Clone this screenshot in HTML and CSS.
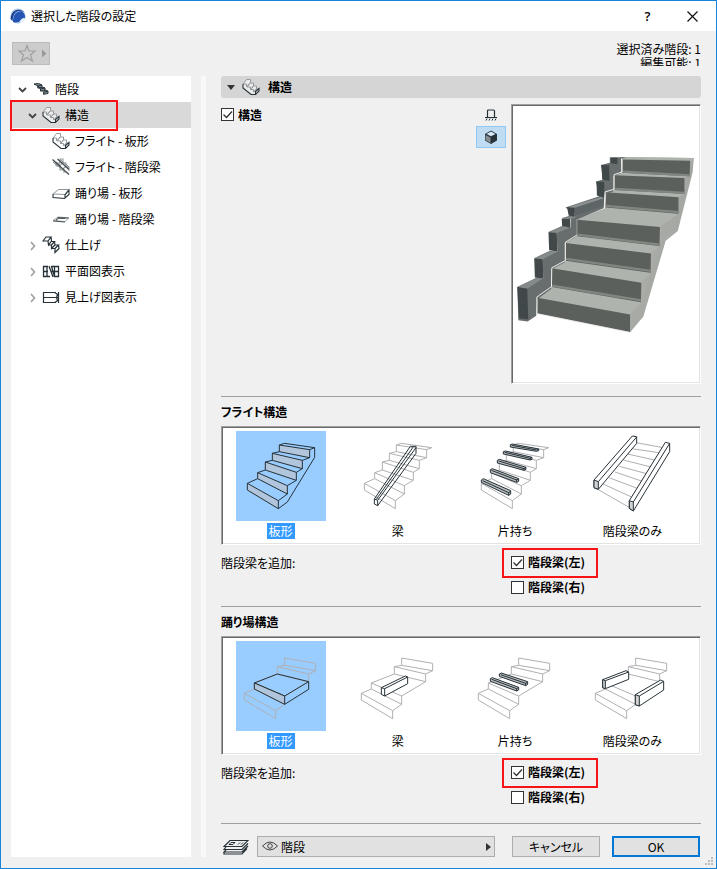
FILE: index.html
```html
<!DOCTYPE html>
<html lang="ja">
<head>
<meta charset="utf-8">
<meta name="viewport" content="width=device-width, initial-scale=1">
<title>選択した階段の設定</title>
<link rel="stylesheet" href="styles.css">
</head>
<body>
<svg class="sprite" aria-hidden="true">
  <symbol id="i-down" viewBox="0 0 9 18"><path d="M1 8l3.500 3.500L8 8" fill="none" stroke="#444" stroke-width="1.800"/></symbol>
  <symbol id="i-right" viewBox="0 0 9 18"><path d="M3 6l3.500 4L3 14" fill="none" stroke="#a3a3a3" stroke-width="1.700"/></symbol>
  <symbol id="i-slab" viewBox="0 0 18 18">
    <path d="M1 6l3.500-4.500h4v3.500h3v3h3v3h3L14 16h-4L1 10z" fill="#fff" fill-opacity=".5"/>
    <path d="M1 6l3.500-4.500h4v3l-3 4M1 6h3.500v3L8 5h3.500v3l-3 3.500V9H5M8.500 11.500L11.500 8h3v3l-3 3v-2.500h-3M11.500 14l3-3H17" fill="none" stroke="#959b9d" stroke-width="1"/>
    <path d="M1 6v4l8 6.500h4.500l3.500-3.500v-2.500l-3.500 3v3" fill="none" stroke="#263238" stroke-width="1.100"/>
  </symbol>
  <symbol id="i-stair" viewBox="0 0 18 18">
    <path d="M2 4l5-.5 3 1.500v2l3 .5v2l3 .8v3l-5 1v-2.500l-3-.5V9L5 8V5.500z" fill="#899093"/>
    <path d="M2 4l4.500-.5L10 5 6 6zM6 6v2l5-.7L13 8 8.500 9zM8.500 9v2l5-.7 2.500 1-4.500 1v2L16 13.500M13 8v2M10 5v2M16 11v2.500" fill="none" stroke="#263238" stroke-width="1"/>
  </symbol>
  <symbol id="i-stringer" viewBox="0 0 18 18">
    <path d="M4 8V5h4V1h3v4h3v4h3v4M4 8h4v4h4v3M4 4l4 3M8 8l3-4M11 11l3-3" fill="none" stroke="#9a9fa1" stroke-width="1.100"/>
    <path d="M.5 1.500l16.500 15M5.500 1l11.500 10.500" fill="none" stroke="#3d474c" stroke-width="1.200"/><path d="M1 4l13 10.500M8 1.500L17 9" stroke="#80878a"/>
  </symbol>
  <symbol id="i-landing" viewBox="0 0 18 18">
    <path d="M1 10l5.500-4.500h10l-3.500 5z" fill="#fff" stroke="#8f9597"/>
    <path d="M1 10v3.500l11.500 1 4.500-4V6l-4 5v3" fill="none" stroke="#263238" stroke-width="1.100"/>
  </symbol>
  <symbol id="i-beam" viewBox="0 0 18 18">
    <path d="M1 10.500l5-3.500 11 .8-4 3.700z" fill="#fff" stroke="#a2a7a9"/>
    <path d="M5.500 7.500l11 .5M1 11l12 1M4 10l2-1.500h7" fill="none" stroke="#4a5459" stroke-width="1.100"/>
  </symbol>
  <symbol id="i-finish" viewBox="0 0 18 18">
    <path d="M1 5l3-4h5L6 5zM6 5l.5 4L9.500 5 9 1M6.500 9h3L12.500 5.500h-3M9.500 9v3.500l3.500-3.500-.5-3.500M9.500 12.500h3.500L16.500 9H13M13 12.500V16.500l4-4-.5-3.500" fill="none" stroke="#263238" stroke-width="1.200"/>
  </symbol>
  <symbol id="i-plan" viewBox="0 0 18 18">
    <path d="M6 4.500H1.500v10H8M1.500 9.500H6M5 4.500v10M7 4l4 11M9 4.500h7.500v10H12M9.500 4.500l3 10M12.500 4.500v10M9 9.500h7.500" fill="none" stroke="#263238" stroke-width="1.300"/>
  </symbol>
  <symbol id="i-rcp" viewBox="0 0 18 18">
    <path d="M14 4.500H1.500v10H14M1.500 9.500H16M13 4.500l2.500 2-1 3 1 3-2.500 2M16.500 4v11" fill="none" stroke="#263238" stroke-width="1.200"/>
  </symbol>
  <symbol id="flight" viewBox="0 0 270 270">
    <path d="M130 42v20l91 18V56zM109 67v21l90 25V88zM88 93v24l93 31v-24zM65 125v18l89 46v-25zM34 157v20l93 56v-24z" class="riser"/>
    <path d="M130 42l15-5 91 13-15 6M109 67l21-5M221 80l-22 8M88 93l21-5M199 113l-18 11M65 125l23-8M181 148l-27 16M34 157l31-14M154 189l-27 20"/>
  </symbol>
  <symbol id="landing" viewBox="0 0 270 270">
    <path d="M146 51l93 16v22l-93-16zM124 77l22-4M239 89l-21 10-94-22v22l94 23V99M55 126l69-27M218 122l-72 43-91-39v18l91 46v-25M25 157l30-13M146 190l-27 19-94-52v20l94 56v-24"/>
  </symbol>
</svg>

<div class="window">
  <header class="titlebar">
    <svg class="logo" viewBox="0 0 16 16" aria-hidden="true"><circle cx="8" cy="8" r="7.500" fill="#a9c4e6"/><path d="M.5 11C1 3 8-1 14 4L9 3C5 3.500 3 7 2.500 13z" fill="#1b3f91"/><path d="M3 14C3 7 6 3.500 10 3.500c3 0 5 2 5.300 6.500-1-.5-2.500-.5-4 1.500-1.500 2.500-5 4-8.300 2.500z" fill="#2455b5"/><path d="M10 13.500c1-3 3-3.500 5-2.500-.5 2-2 3.500-5 4.300z" fill="#e8f0fa"/></svg>
    <h1 class="title">選択した階段の設定</h1>
    <button class="caption" type="button" aria-label="ヘルプ">?</button>
    <button class="caption" type="button" aria-label="閉じる"><svg width="11" height="11" viewBox="0 0 11 11"><path d="M.5.5l10 10M10.500.5l-10 10" stroke="#111" stroke-width="1.200"/></svg></button>
  </header>

  <div class="toolbar">
    <button class="favorite" type="button" aria-label="お気に入り"><svg width="36" height="21" viewBox="0 0 36 21"><path d="M14 2.500l2 5.500h6l-4.500 4 2 6-5.500-3.500L8.500 18l2-6L6 8h6z" fill="none" stroke="#a0a0a0" stroke-width="1.200"/><path d="M29 6.500v8l4.500-4z" fill="#999"/></svg></button>
    <div class="counts"><p class="count">選択済み階段: 1</p><p class="count count-cut">編集可能: 1</p></div>
  </div>

  <div class="body">
    <nav class="sidebar">
      <ul class="tree">
        <li><button class="node" type="button"><svg class="arrow"><use href="#i-down"/></svg><svg class="icon"><use href="#i-stair"/></svg>階段</button></li>
        <li class="marked-row"><button class="node level2 current" type="button"><svg class="arrow"><use href="#i-down"/></svg><svg class="icon"><use href="#i-slab"/></svg>構造</button></li>
        <li><button class="node level3" type="button"><span class="arrow"></span><svg class="icon"><use href="#i-slab"/></svg>フライト - 板形</button></li>
        <li><button class="node level3" type="button"><span class="arrow"></span><svg class="icon"><use href="#i-stringer"/></svg>フライト - 階段梁</button></li>
        <li><button class="node level3" type="button"><span class="arrow"></span><svg class="icon"><use href="#i-landing"/></svg>踊り場 - 板形</button></li>
        <li><button class="node level3" type="button"><span class="arrow"></span><svg class="icon"><use href="#i-beam"/></svg>踊り場 - 階段梁</button></li>
        <li><button class="node level2" type="button"><svg class="arrow"><use href="#i-right"/></svg><svg class="icon"><use href="#i-finish"/></svg>仕上げ</button></li>
        <li><button class="node level2" type="button"><svg class="arrow"><use href="#i-right"/></svg><svg class="icon"><use href="#i-plan"/></svg>平面図表示</button></li>
        <li><button class="node level2" type="button"><svg class="arrow"><use href="#i-right"/></svg><svg class="icon"><use href="#i-rcp"/></svg>見上げ図表示</button></li>
      </ul>
    </nav>
    <div class="splitter"></div>

    <main class="panel">
      <button class="panel-head" type="button"><svg width="8" height="5" viewBox="0 0 8 5"><path d="M0 0h8L4 5z" fill="#333"/></svg><svg class="icon"><use href="#i-slab"/></svg>構造</button>

      <section class="overview">
        <label class="check"><input type="checkbox" checked>構造</label>
        <div class="views">
          <button class="view" type="button" aria-label="2D 表示"><svg width="14" height="14" viewBox="0 0 14 14"><path d="M3.500 9V3q0-1 1-1h5q1 0 1 1v6M1 9.500h12" fill="none" stroke="#263238" stroke-width="1.200"/><path d="M2 12.500l1-2M5 12.500l1-2M8 12.500l1-2M11 12.500l1-2" stroke="#263238"/></svg></button>
          <button class="view view-on" type="button" aria-label="3D 表示"><svg width="14" height="14" viewBox="0 0 14 14"><path d="M1 4l6-3.500L13 4v6.500L7 14l-6-3.500z" fill="#263238"/><path d="M2.500 4L7 1.500 11.500 4 7 6.300z" fill="#d5e6f6"/><path d="M1.500 5L6.500 7.500V13l-5-3z" fill="#868d92"/></svg></button>
        </div>
        <div class="preview">
          <svg viewBox="24 -102 561 828" role="img" aria-label="階段のプレビュー">
            <defs><linearGradient id="side" x1="0" x2="1"><stop offset="0" stop-color="#b7bab5"/><stop offset="1" stop-color="#a3a6a1"/></linearGradient></defs>
            <path d="M353 49L569 52 566 94 521 272 484 302 417 530 378 577 97 520 98 470 141 384 183 306 218 236 301 204 304 153 329 102 351 96z" fill="url(#side)"/>
            <path d="M353 49l216 3v9l-216-5zM329 104l24-8 204 11-16 5zM304 155l25-7 212 12-18 10zM218 238l86-34 219 16-56 40zM183 308l35-17 248 27-26 22zM141 384l41-20 257 34-28 30zM98 473l43-31 269 45-33 37z" fill="#afb3ae"/>
            <g fill="#5c605c"><path d="M353 56l205 4-1 47-204-11zM329 104l212 8v48l-212-12zM304 155l219 15v50l-219-19zM218 238l249 22-1 57-248-29zM183 308l257 32-1 58-257-36zM141 384l270 44-1 59-269-46zM98 473l279 51v53L97 520z"/></g>
            <path d="M354 93l203 11M330 145l211 12M305 196l218 19M218 283l248 30M183 356l256 36M142 437l268 44" stroke="#828681" stroke-width="7"/>
            <path d="M377 524v53l40-47 67-228-18 15-26 81-29 89z" fill="#a4a8a2" opacity=".55"/>
            <path d="M37 441l56-27 22 2-1-59-26-3 46-22 24 2-2-56-25-3 48-21 19 8v-26l-26-3 26-8 15-2-31-22 102-34-10-44 22-6-7-44 27-7v-16l50-1-16 5v44l-24 9v46l-25 9-2 41-83 35v50l-36 22v56l-41 22v59l-42 31-3 50-26 17-28-4z" fill="#686d6e"/>
            <path d="M187 200l104-31 8 4-89 31z" fill="#8b9090"/>
            <path d="M210 202l89-29v23l-91 31z" fill="#5e6567"/>
            <path d="M37 441l55-26 21 1-46 30zM88 354l47-20 21 1-42 22zM131 275l49-18 15 5-39 16zM171 234l30-7 15 3-20 6z" fill="#858a8a"/>
            <g fill="#41484a"><path d="M37 441l30 5 3 93-28-4zM88 354l26 3 1 59-25-4zM131 275l25 3 2 56-25-4zM171 234l25 2 1 26-25-6zM187 200l23 2-2 26-16-2zM276 123l23 1v48l-22-7zM291 73l23 1 1 47-22-4zM318 50l21 1v20l-19-3z"/></g>
            <path d="M96 521v-50l44-31 1-57 41-22v-55l35-22M299 203l3-49 27-8v-44l24-8V56" fill="none" stroke="#eef0ee" stroke-width="3"/>
            <path d="M98 522l280 56" stroke="#ddd" stroke-width="2"/>
          </svg>
        </div>
      </section>

      <section class="structure">
        <h2 class="heading">フライト構造</h2>
        <div class="gallery" role="radiogroup" aria-label="フライト構造">
          <label class="choice"><input type="radio" name="flight" checked>
            <svg class="thumb" viewBox="0 0 270 270"><g class="dark filled"><use href="#flight"/><path d="M236 50v29l-82 134-27 20"/></g></svg><span class="name">板形</span></label>
          <label class="choice"><input type="radio" name="flight">
            <svg class="thumb" viewBox="0 0 270 270"><g class="grey"><use href="#flight"/></g><g class="dark"><path d="M64 204l10 4v16l-10-5zM64 204L172 46h17v21L74 224M74 208L189 50M70 205L180 49"/></g></svg><span class="name">梁</span></label>
          <label class="choice"><input type="radio" name="flight">
            <svg class="thumb" viewBox="0 0 270 270"><g class="grey"><use href="#flight"/></g><g class="beams"><path d="M34 147l6-4 82 36v10l-6 4-82-39zM61 116l6-3 79 30v8l-6 3-79-29zM82 88l6-3 80 24v6l-6 3-80-22zM100 62l6-2 80 19v6l-6 2-80-18zM121 41l6-2 79 15v5l-6 2-79-13z"/><path d="M38 149l78 36 6-5M64 118l76 29 6-4M86 90l76 23 6-4M104 64l76 18 6-3M125 43l75 14 6-3M116 183v10M140 145v9M162 111v7M180 81v6"/></g></svg><span class="name">片持ち</span></label>
          <label class="choice"><input type="radio" name="flight">
            <svg class="thumb" viewBox="0 0 270 270"><g class="grey"><path d="M147 35l82 15M134 53l82 12M121 69l82 18M109 87l83 21M97 106l82 22M84 123l82 28M66 140l85 32M48 159l88 40M34 176l94 54"/></g><g class="dark solid"><path d="M21 147L136 15l13 2v20L34 175l-13-5zM127 209L235 34l13 3v25L139 240l-12-8z"/><path d="M34 152L149 18M139 213L248 37"/><path class="riser" d="M21 147l13 5v23l-13-5zM127 209l12 4v27l-12-8z"/></g></svg><span class="name">階段梁のみ</span></label>
        </div>
        <div class="additions">
          <span class="caption-text">階段梁を追加:</span>
          <div class="checks"><label class="check marked"><input type="checkbox" checked>階段梁(左)</label><label class="check"><input type="checkbox">階段梁(右)</label></div>
        </div>
      </section>

      <section class="structure">
        <h2 class="heading">踊り場構造</h2>
        <div class="gallery" role="radiogroup" aria-label="踊り場構造">
          <label class="choice"><input type="radio" name="landing" checked>
            <svg class="thumb" viewBox="0 0 270 270"><g class="grey"><use href="#landing"/></g><g class="dark filled"><path d="M55 126l69-27 94 23-72 43zM218 122v23l-72 45"/><path class="riser" d="M55 126v18l91 46v-25z"/></g></svg><span class="name">板形</span></label>
          <label class="choice"><input type="radio" name="landing">
            <svg class="thumb" viewBox="0 0 270 270"><g class="grey"><use href="#landing"/></g><g class="dark solid"><path d="M85 140l72-35 7 3v20l-69 37-10-5zM85 140l10 3v22M95 143l69-35"/></g></svg><span class="name">梁</span></label>
          <label class="choice"><input type="radio" name="landing">
            <svg class="thumb" viewBox="0 0 270 270"><g class="grey"><use href="#landing"/></g><g class="beams"><path d="M88 99l6-3 79 26v8l-6 4-79-28zM61 113l6-3 79 29v8l-6 3-79-29z"/><path d="M92 101l75 26 6-4M65 115l75 28 6-4M167 126v8M140 142v8"/></g></svg><span class="name">片持ち</span></label>
          <label class="choice"><input type="radio" name="landing">
            <svg class="thumb" viewBox="0 0 270 270"><g class="grey"><use href="#landing"/></g><g class="dark solid"><path d="M47 116l70-27 8 4v22l-70 28-8-3zM145 161l76-44 9 4v26l-73 48-12-4zM55 119l70-26M157 165l73-44"/><path class="riser" d="M47 116l8 3v24l-8-3zM145 161l12 4v30l-12-4z"/></g></svg><span class="name">階段梁のみ</span></label>
        </div>
        <div class="additions">
          <span class="caption-text">階段梁を追加:</span>
          <div class="checks"><label class="check marked"><input type="checkbox" checked>階段梁(左)</label><label class="check"><input type="checkbox">階段梁(右)</label></div>
        </div>
      </section>

      <footer class="footer">
        <svg class="layers" width="26" height="16" viewBox="0 0 26 16" aria-hidden="true"><path d="M1 7.500L7 1.500h18l-6 6zM3 8l-2 2.500h18l6-6M3 11l-2 2h18l6-6M1 13v2h18l5-5.500" fill="none" stroke="#263238" stroke-width="1.200"/><path d="M8 3.500h4l-2 2H6zM15 5.500l2-2M18 5.500l2-2" fill="none" stroke="#263238"/></svg>
        <div class="layer-select">
          <select aria-label="レイヤー"><option>階段</option></select>
          <svg class="eye" width="16" height="10" viewBox="0 0 16 10"><path d="M.5 5Q8-3 15.500 5 8 13 .5 5z" fill="none" stroke="#444"/><circle cx="8" cy="5" r="2.300" fill="none" stroke="#444"/></svg>
          <svg class="more" width="5" height="8" viewBox="0 0 5 8"><path d="M0 0l5 4-5 4z" fill="#333"/></svg>
        </div>
        <button class="action" type="button">キャンセル</button>
        <button class="action action-default" type="button">OK</button>
      </footer>
    </main>
  </div>
  <svg class="grip" width="8" height="8" viewBox="0 0 8 8" aria-hidden="true"><path d="M6 0h2v2H6zM3 3h2v2H3zM6 3h2v2H6zM0 6h2v2H0zM3 6h2v2H3zM6 6h2v2H6z" fill="#bdbdbd"/></svg>
</div>
</body>
</html>
```
FILE: styles.css
```css
* { box-sizing: border-box; }

body {
  margin: 0;
  color: #000;
  font: 12px/16px "Noto Sans CJK JP", sans-serif;
  font-feature-settings: "palt";
}

button, select, input { margin: 0; font: inherit; font-feature-settings: inherit; color: inherit; }
button { padding: 0; border: 0; background: none; }
h1, h2, p, ul { margin: 0; padding: 0; font: inherit; }
li { list-style: none; }
svg { display: block; flex: none; }

.sprite { position: absolute; width: 0; height: 0; }

.window {
  position: relative;
  display: flex;
  flex-direction: column;
  min-height: 100vh;
  border: 1px solid #1883d7;
  background: #f0f0f0;
}

.titlebar {
  display: flex;
  align-items: center;
  height: 30px;
  padding: 0 1px 0 9px;
  background: #fff;
}
.logo { width: 16px; height: 16px; }
.title { flex: 1; margin-left: 5px; }
.caption { display: flex; align-items: center; justify-content: center; width: 45px; height: 30px; font: 600 13px "Open Sans", sans-serif; }

.toolbar {
  display: flex;
  justify-content: space-between;
  height: 45px;
  padding: 11px 15px 0 11px;
}
.favorite { width: 38px; height: 23px; border: 1px solid #bcbcbc; background: #ccc; }
.counts { text-align: right; }
.count { height: 14px; line-height: 14px; }
.count-cut { height: 10px; overflow: hidden; }

.body {
  flex: 1;
  display: flex;
  padding: 0 15px 11px 10px;
}
.sidebar { width: 180px; background: #fff; }
.node {
  display: flex;
  align-items: center;
  gap: 5px;
  width: 100%;
  height: 26px;
  padding-left: 7px;
  white-space: nowrap;
}
.level2 { padding-left: 17px; }
.level3 { padding-left: 27px; }
.current { background: #d9d9d9; }
.arrow { width: 9px; height: 18px; }
.icon { width: 18px; height: 18px; }

.marked-row, .marked { position: relative; }
.marked-row::after, .marked::after {
  content: "";
  position: absolute;
  border: 2px solid #f81414;
  pointer-events: none;
}
.marked-row::after { inset: -2px 73px -3px -1px; }
.marked::after { inset: -2px -13px -3px -9px; }

.splitter { width: 5px; margin: 0 15px 0 10px; background: #f8f8f8; }

.panel { flex: 1; display: flex; flex-direction: column; min-width: 0; }
.panel-head {
  display: flex;
  align-items: center;
  gap: 8px;
  height: 22px;
  padding-left: 6px;
  border-radius: 3px;
  background: #d5d5d5;
  font-weight: 700;
}
.panel-head .icon { margin-left: -1px; }

.overview {
  display: grid;
  grid-template-columns: 1fr 30px 190px;
  column-gap: 5px;
  align-items: start;
  padding: 6px 0 12px;
}
.views { display: grid; }
.view { display: flex; align-items: center; justify-content: center; height: 22px; border: 1px solid transparent; }
.view-on { border-color: #90c8f6; background: #c0dcf3; }
.preview, .gallery {
  border: 1px solid;
  border-color: #a0a0a0 #fff #fff #a0a0a0;
  background: #fff;
  box-shadow: inset 1px 1px #696969, inset -1px -1px #e3e3e3;
}
.preview { padding: 2px 1px 1px 1px; }
.preview svg { width: 100%; height: auto; }

.check {
  display: flex;
  align-items: center;
  justify-self: start;
  gap: 4px;
  height: 25px;
  font-weight: 700;
}
.overview .check { height: 21px; }
.check input {
  appearance: none;
  width: 13px;
  height: 13px;
  border: 1px solid #333;
  background: #fff;
}
.check input:checked {
  background-image: url("data:image/svg+xml,%3Csvg xmlns='http://www.w3.org/2000/svg' viewBox='0 0 11 11'%3E%3Cpath d='M1.500 5.500l3 3L10 2.500' fill='none' stroke='%23333' stroke-width='1.300'/%3E%3C/svg%3E");
}

.structure { border-top: 1px solid #a0a0a0; padding-bottom: 6px; }
.heading { height: 29px; line-height: 29px; font-weight: 700; }
.gallery {
  display: grid;
  grid-template-columns: repeat(4, 1fr);
  height: 119px;
  padding: 4px 9px 0 0;
}
.choice { display: flex; flex-direction: column; align-items: center; }
.choice input { position: absolute; appearance: none; width: 0; height: 0; }
.thumb { width: 90px; height: 90px; margin-bottom: 2px; }
.name { padding: 0 2px; }
.choice input:checked ~ .thumb { background: #99ccff; }
.choice input:checked ~ .name { background: #3399ff; color: #fff; }
.thumb g { fill: none; stroke-width: 3; }
.dark { stroke: #263238; }
.grey { stroke: #b0b0b4; }
.filled { --face: #b1c5dd; }
.riser { fill: var(--face, none); }
.thumb .solid { fill: #fff; --face: #d2d2d2; }
.thumb .beams { fill: #b9bdbf; stroke: #263238; }
.beams path + path { fill: none; }

.additions { display: grid; grid-template-columns: 1fr 190px; padding-top: 5px; }
.caption-text { line-height: 25px; }
.checks { display: grid; }

.footer {
  display: grid;
  grid-template-columns: 26px 1fr 88px 88px;
  align-items: center;
  margin-top: auto;
  padding: 12px 13px 0 0;
  border-top: 1px solid #a0a0a0;
}
.layers { margin-left: 2px; }
.layer-select { position: relative; margin: 0 17px 0 10px; }
.layer-select select {
  appearance: none;
  display: block;
  width: 100%;
  height: 21px;
  padding: 0 16px 0 23px;
  border: 1px solid #adadad;
  border-radius: 0;
  background: #e1e1e1;
}
.eye { position: absolute; left: 5px; top: 5px; }
.more { position: absolute; right: 4px; top: 7px; }
.action { height: 21px; border: 1px solid #adadad; background: #e1e1e1; }
.action-default { margin-left: 12px; margin-right: -12px; border: 2px solid #0078d7; }
.grip { position: absolute; right: 3px; bottom: 3px; }
```
